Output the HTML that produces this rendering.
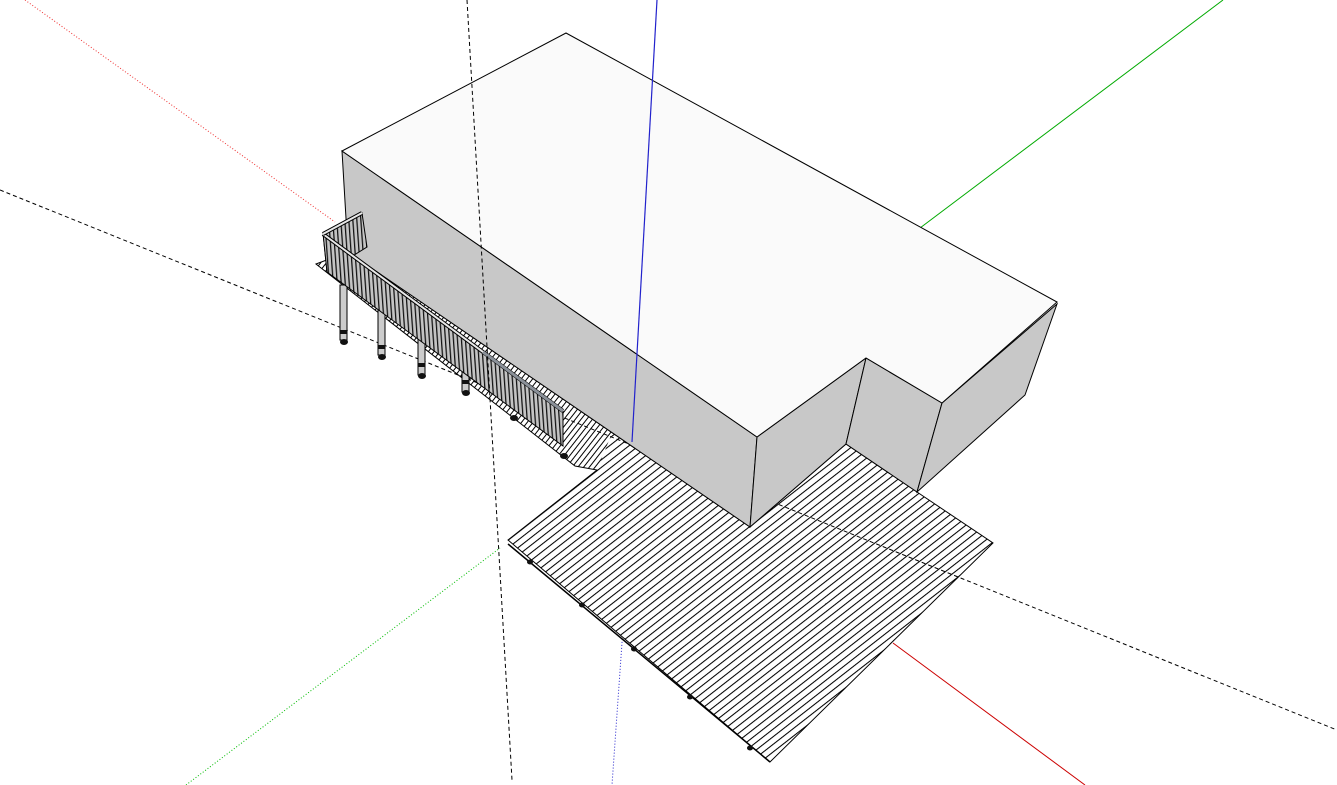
<!DOCTYPE html>
<html><head><meta charset="utf-8"><style>html,body{margin:0;padding:0;background:#fff;overflow:hidden}svg{display:block}</style></head>
<body>
<svg width="1337" height="785" viewBox="0 0 1337 785" xmlns="http://www.w3.org/2000/svg">
<defs>
<pattern id="boards" width="6" height="6" patternUnits="userSpaceOnUse" patternTransform="rotate(-38)">
<line x1="0" y1="0.5" x2="6" y2="0.5" stroke="#000" stroke-width="1.1"/>
</pattern>
<pattern id="boards2" width="4.5" height="4.5" patternUnits="userSpaceOnUse" patternTransform="rotate(-52)">
<rect width="4.5" height="4.5" fill="#fff"/>
<line x1="0" y1="0.5" x2="4.5" y2="0.5" stroke="#000" stroke-width="1"/>
</pattern>
<pattern id="bal" width="4" height="4" patternUnits="userSpaceOnUse" patternTransform="rotate(-4)">
<rect width="4" height="4" fill="#c4c4c4"/>
<line x1="0.6" y1="0" x2="0.6" y2="4" stroke="#111" stroke-width="1.3"/>
</pattern>
<clipPath id="walk"><polygon points="316,264 348,252 612,433 597,470 575,466"/></clipPath>
<clipPath id="main"><polygon points="316,264 348,252 750,527 846,444 917,492 993,543 770,762 508,540 597,470 575,466"/></clipPath>
</defs>

<!-- axes -->
<line x1="25" y1="0" x2="335" y2="222" stroke="#e33" stroke-width="1" stroke-dasharray="1,2"/>
<line x1="893" y1="643" x2="1085" y2="785" stroke="#c00" stroke-width="1"/>
<line x1="920" y1="228" x2="1223" y2="0" stroke="#0a0" stroke-width="1"/>
<line x1="186" y1="785" x2="500" y2="548" stroke="#0b0" stroke-width="1" stroke-dasharray="1,2"/>
<line x1="625" y1="600" x2="612" y2="785" stroke="#22c" stroke-width="1" stroke-dasharray="1,2"/>

<!-- deck -->
<polygon points="316,264 348,252 750,527 846,444 917,492 993,543 770,762 508,540 597,470 575,466" fill="#fff"/>
<rect x="300" y="240" width="700" height="530" fill="url(#boards)" clip-path="url(#main)"/>
<rect x="300" y="240" width="360" height="240" fill="url(#boards2)" clip-path="url(#walk)"/>
<polygon points="316,264 348,252 750,527 846,444 917,492 993,543 770,762 508,540 597,470 575,466" fill="none" stroke="#000" stroke-width="1"/>
<line x1="508" y1="544" x2="770" y2="762" stroke="#000" stroke-width="1.5"/>

<!-- dashed line (hidden behind box) -->
<line x1="0" y1="190" x2="1337" y2="730" stroke="#000" stroke-width="1" stroke-dasharray="4,3"/>

<!-- box -->
<polygon points="342,151 757,437 750,527 348,252" fill="#c8c8c8" stroke="#000" stroke-width="1"/>
<polygon points="757,437 866,358 846,444 750,527" fill="#c8c8c8" stroke="#000" stroke-width="1"/>
<polygon points="866,358 942,403 917,492 846,444" fill="#c8c8c8" stroke="#000" stroke-width="1"/>
<polygon points="942,403 1057,304 1025,395 917,492" fill="#c8c8c8" stroke="#000" stroke-width="1"/>
<polygon points="342,151 566,33 1057,302 942,403 866,358 757,437" fill="#fafafa" stroke="#000" stroke-width="1"/>

<!-- blue axis -->
<line x1="657" y1="0" x2="632" y2="442" stroke="#22c" stroke-width="1.2"/>

<!-- posts under walkway -->
<g stroke="#000" stroke-width="1" fill="#ccc">
<rect x="340" y="285" width="7" height="55"/>
<rect x="378" y="300" width="7" height="55"/>
<rect x="418" y="318" width="7" height="57"/>
<rect x="462" y="340" width="7" height="52"/>
</g>
<g fill="#111">
<rect x="340" y="330" width="7" height="4"/><rect x="378" y="345" width="7" height="4"/>
<rect x="418" y="363" width="7" height="4"/><rect x="462" y="380" width="7" height="4"/>
<ellipse cx="344" cy="342" rx="4" ry="3"/><ellipse cx="382" cy="357" rx="4" ry="3"/>
<ellipse cx="422" cy="376" rx="4" ry="3"/><ellipse cx="466" cy="393" rx="4" ry="3"/>
<ellipse cx="514" cy="418" rx="4" ry="3"/><ellipse cx="564" cy="456" rx="4" ry="3"/>
<ellipse cx="530" cy="562" rx="3" ry="2.5"/><ellipse cx="582" cy="605" rx="3" ry="2.5"/>
<ellipse cx="634" cy="649" rx="3" ry="2.5"/><ellipse cx="690" cy="697" rx="3" ry="2.5"/>
<ellipse cx="750" cy="748" rx="3" ry="2.5"/>
</g>

<!-- railing -->
<polygon points="323,233 362,213 367,247 327,272" fill="url(#bal)" stroke="#000" stroke-width="1"/>
<polygon points="323,233 563,410 563,446 327,272" fill="url(#bal)" stroke="#000" stroke-width="1"/>
<line x1="323" y1="234" x2="563" y2="411" stroke="#000" stroke-width="4"/>
<line x1="323" y1="234" x2="563" y2="411" stroke="#e8e8e8" stroke-width="2"/>
<line x1="483" y1="352" x2="563" y2="411" stroke="#8a9098" stroke-width="3"/>
<line x1="323" y1="234" x2="362" y2="213" stroke="#000" stroke-width="4"/>
<line x1="323" y1="234" x2="362" y2="213" stroke="#e8e8e8" stroke-width="2"/>

<!-- vertical dashed -->
<line x1="467" y1="0" x2="512" y2="780" stroke="#000" stroke-width="1" stroke-dasharray="4,3"/>
</svg>
</body></html>
